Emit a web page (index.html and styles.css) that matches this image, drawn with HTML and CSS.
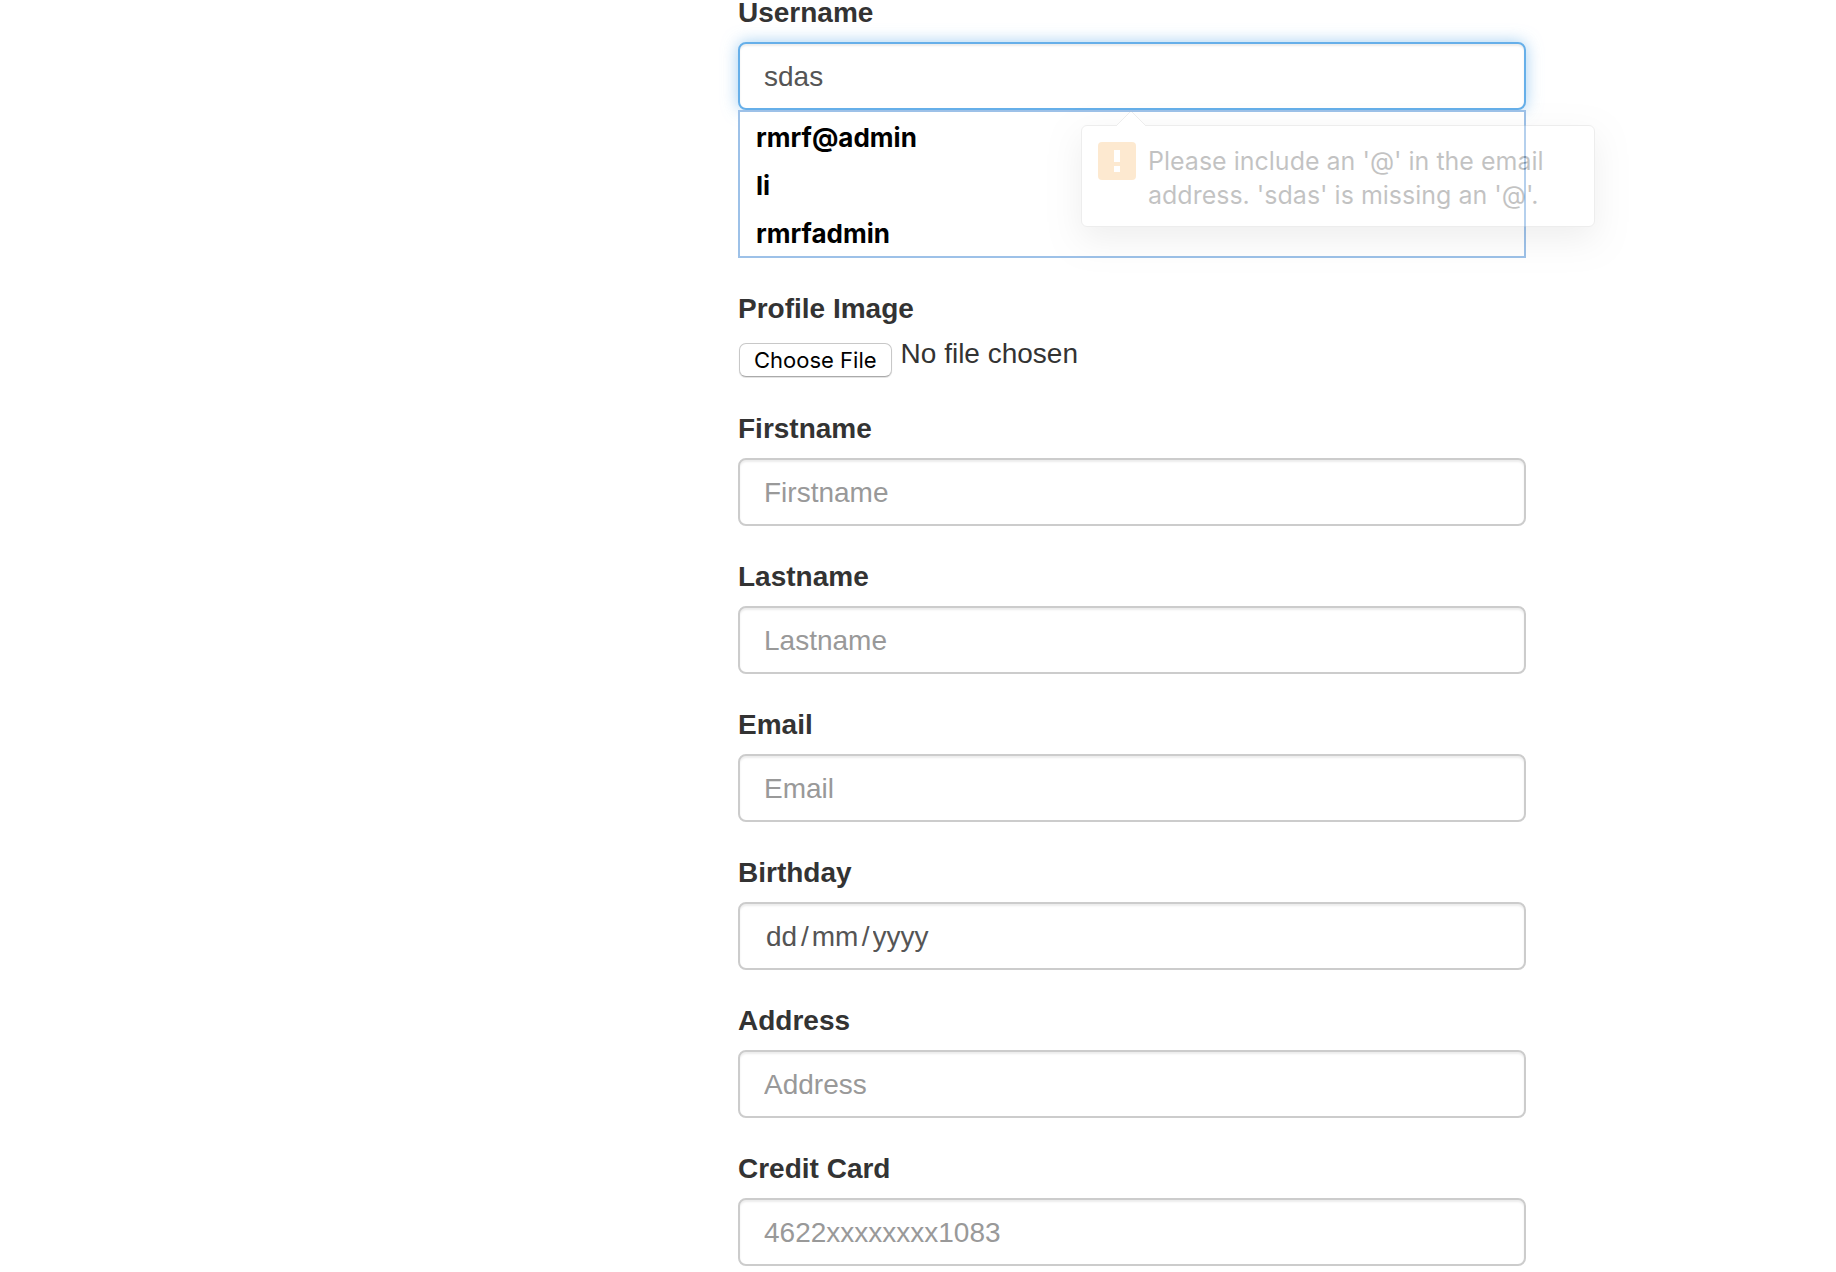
FILE: index.html
```html
<!DOCTYPE html>
<html lang="en">
<head>
<meta charset="utf-8">
<title>Edit Profile</title>
<link rel="stylesheet" href="styles.css">
</head>
<body>
<main class="page">
  <form class="profile-form" novalidate>
    <div class="form-group">
      <label class="form-label" for="username">Username</label>
      <div class="combo">
        <input class="form-control is-focused" id="username" type="text" value="sdas" aria-controls="suggestions" aria-describedby="username-hint">
        <ul class="suggestions" id="suggestions">
          <li class="suggestion">rmrf@admin</li>
          <li class="suggestion">li</li>
          <li class="suggestion">rmrfadmin</li>
        </ul>
        <div class="validation-tip" id="username-hint" role="alert">
          <svg class="tip-arrow" viewBox="0 0 30 16" width="30" height="16" aria-hidden="true">
            <path d="M0 16 L15 1 L30 16" fill="#fff" stroke="#bbb"/>
          </svg>
          <svg class="tip-icon" viewBox="0 0 38 38" width="38" height="38" aria-hidden="true">
            <rect width="38" height="38" rx="4" fill="#f9ac48"/>
            <path d="M16 8h6v12h-6zM16 24h6v6h-6z" fill="#fff"/>
          </svg>
          <p class="tip-text">Please include an '@' in the email<br>address. 'sdas' is missing an '@'.</p>
        </div>
      </div>
    </div>
    <div class="form-group">
      <label class="form-label" for="image">Profile Image</label>
      <input class="file-input" id="image" type="file">
    </div>
    <div class="form-group">
      <label class="form-label" for="firstname">Firstname</label>
      <input class="form-control" id="firstname" type="text" placeholder="Firstname">
    </div>
    <div class="form-group">
      <label class="form-label" for="lastname">Lastname</label>
      <input class="form-control" id="lastname" type="text" placeholder="Lastname">
    </div>
    <div class="form-group">
      <label class="form-label" for="email">Email</label>
      <input class="form-control" id="email" type="email" placeholder="Email">
    </div>
    <div class="form-group">
      <label class="form-label" for="birthday">Birthday</label>
      <div class="form-control date-control">
        <input class="date-part" id="birthday" type="text" placeholder="dd" aria-label="Birthday, day">
        <span>/</span>
        <input class="date-part date-month" type="text" placeholder="mm" aria-label="Birthday, month">
        <span>/</span>
        <input class="date-part date-year" type="text" placeholder="yyyy" aria-label="Birthday, year">
      </div>
    </div>
    <div class="form-group">
      <label class="form-label" for="address">Address</label>
      <input class="form-control" id="address" type="text" placeholder="Address">
    </div>
    <div class="form-group">
      <label class="form-label" for="card">Credit Card</label>
      <input class="form-control" id="card" type="text" placeholder="4622xxxxxxxx1083">
    </div>
  </form>
</main>
</body>
</html>
```
FILE: styles.css
```css
* {
  box-sizing: border-box;
}

body {
  margin: 0;
  background: #fff;
  color: #333;
  font: 28px/40px "Liberation Sans", Arial, sans-serif;
}

.page {
  display: grid;
  grid-template-columns: 738fr 788fr 310fr;
}

.profile-form {
  grid-column: 2;
  display: flex;
  flex-direction: column;
  gap: 38px;
  min-width: 0;
}

.form-group {
  display: flex;
  flex-direction: column;
  gap: 16px;
}

.form-label {
  font-weight: 700;
  line-height: 26px;
}

.form-control {
  display: block;
  width: 100%;
  height: 68px;
  padding: 13px 24px 11px;
  border: 2px solid #ccc;
  border-radius: 8px;
  background: #fff;
  box-shadow: inset 0 2px 2px rgba(0, 0, 0, 0.075);
  color: #555;
  font: inherit;
  outline: 0;
}

.form-control::placeholder {
  color: #999;
  opacity: 1;
}

.form-control.is-focused {
  border-color: #66afe9;
  box-shadow: inset 0 2px 2px rgba(0, 0, 0, 0.075), 0 0 16px rgba(102, 175, 233, 0.6);
}

.combo {
  position: relative;
}

.suggestions {
  position: relative;
  margin: 0;
  padding: 2px 0 0;
  border: 2px solid #9dc1e8;
  background: #fff;
  list-style: none;
}

.suggestion {
  height: 48px;
  padding: 0 16px;
  color: #000;
  font: 700 26px/48px Inter, sans-serif;
}

.suggestion:last-child {
  height: 46px;
}

.validation-tip {
  position: absolute;
  top: 83px;
  left: calc(50% - 51px);
  display: flex;
  gap: 12px;
  width: 514px;
  padding: 16px 16px 14px;
  border: 1px solid #bbb;
  border-radius: 6px;
  background: #fff;
  box-shadow: 0 12px 32px rgba(0, 0, 0, 0.25);
  opacity: 0.25;
}

.tip-arrow {
  position: absolute;
  top: -16px;
  left: 34px;
}

.tip-icon {
  flex: none;
}

.tip-text {
  margin: 0;
  padding: 2px 0 0;
  color: #111;
  font: 25px/34px Inter, sans-serif;
  white-space: nowrap;
}

.file-input {
  height: 40px;
  color: #333;
  font: inherit;
  line-height: 32px;
}

.file-input::file-selector-button {
  height: 34px;
  margin: 0 9px 0 1px;
  padding: 0 14px;
  border: 1px solid #c8c8c8;
  border-bottom-color: #aaa;
  border-radius: 7px;
  background: #fff;
  box-shadow: 0 1px 1px rgba(0, 0, 0, 0.12);
  color: #000;
  font: 22px/32px Inter, sans-serif;
  vertical-align: -5px;
}

.date-control {
  display: flex;
  gap: 3px;
  padding-left: 26px;
}

.date-part {
  width: 32px;
  padding: 0;
  border: 0;
  background: transparent;
  color: inherit;
  font: inherit;
  outline: 0;
}

.date-part::placeholder {
  color: #555;
  opacity: 1;
}

.date-month {
  width: 47px;
}

.date-year {
  width: 58px;
}
```
